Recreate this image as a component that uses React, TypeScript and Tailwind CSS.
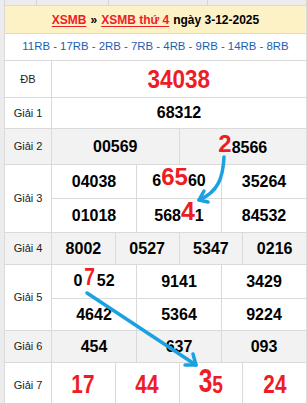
const RED = "text-[#ee1c25]"

function Label({ children, className = "" }: { children: React.ReactNode; className?: string }) {
  return (
    <div className={`flex items-center justify-center text-[11px] text-[#222] ${className}`}>
      {children}
    </div>
  )
}

function Num({ children, className = "", red = false }: { children: React.ReactNode; className?: string; red?: boolean }) {
  return (
    <div className={`flex items-center justify-center font-bold ${red ? "text-[#ee1c25]" : "text-black text-[16px]"} ${className}`}>
      {children}
    </div>
  )
}

// red highlighted digits, drawn a bit squeezed like the source image
function Hi({ children, className = "" }: { children: React.ReactNode; className?: string }) {
  return <span className={`inline-block leading-none ${RED} ${className}`}>{children}</span>
}

export default function App() {
  const codes = ["11RB", "17RB", "2RB", "7RB", "4RB", "9RB", "14RB", "8RB"]

  return (
    <div className="relative w-[307px] h-[403px] overflow-hidden bg-[#ececec] font-['Liberation_Sans',Arial,sans-serif]">
      {/* tail of the previous table */}
      <div className="ml-[4px] grid h-[5px] grid-cols-[31px_71px_98px_1fr] gap-px bg-[#d6d6d6] px-px">
        <div className="bg-[#ececec]" />
        <div className="bg-[#ececec]" />
        <div className="bg-[#ececec]" />
        <div className="bg-[#ececec]" />
      </div>

      <div className="ml-[4px] grid w-[303px] grid-cols-[46px_repeat(12,1fr)] gap-px bg-[#dadada] p-px">
        <div className="col-span-13 flex h-[27px] items-center justify-center bg-[#fdf1c6] text-[12px] font-bold text-black">
          <a className={`${RED} underline underline-offset-2`}>XSMB</a>
          <span className="mx-1">»</span>
          <a className={`${RED} underline underline-offset-2`}>XSMB thứ 4</a>
          <span className="ml-1">ngày 3-12-2025</span>
        </div>

        <div className="col-span-13 flex h-[26px] items-center justify-center bg-white text-[11.4px] text-[#1d5fae]">
          {codes.join(" - ")}
        </div>

        {/* ĐB */}
        <Label className="h-[36px] bg-white">ĐB</Label>
        <Num red className="col-span-12 bg-white">
          <Hi className="origin-center scale-x-[0.9] text-[25px]">34038</Hi>
        </Num>

        {/* Giải 1 */}
        <Label className="h-[30px] bg-white">Giải 1</Label>
        <Num className="col-span-12 bg-white">68312</Num>

        {/* Giải 2 */}
        <Label className="h-[35px] bg-[#f2f2f2]">Giải 2</Label>
        <Num className="col-span-6 bg-[#f2f2f2]">00569</Num>
        <Num className="col-span-6 items-end bg-[#f2f2f2] pb-[8px]">
          <Hi className="text-[24px]">2</Hi>
          <span className="leading-none">8566</span>
        </Num>

        {/* Giải 3 */}
        <Label className="row-span-2 bg-white">Giải 3</Label>
        <Num className="col-span-4 h-[33px] bg-white">04038</Num>
        <Num className="col-span-4 items-end bg-white pb-[9px]">
          <span className="leading-none">6</span>
          <Hi className="text-[24px]">65</Hi>
          <span className="leading-none">60</span>
        </Num>
        <Num className="col-span-4 bg-white">35264</Num>
        <Num className="col-span-4 h-[33px] bg-white">01018</Num>
        <Num className="col-span-4 items-end bg-white pb-[8px]">
          <span className="leading-none">568</span>
          <Hi className="text-[25px]">4</Hi>
          <span className="leading-none">1</span>
        </Num>
        <Num className="col-span-4 bg-white">84532</Num>

        {/* Giải 4 */}
        <Label className="h-[31px] bg-[#f2f2f2]">Giải 4</Label>
        {["8002", "0527", "5347", "0216"].map(n => (
          <Num key={n} className="col-span-3 bg-[#f2f2f2]">{n}</Num>
        ))}

        {/* Giải 5 */}
        <Label className="row-span-2 bg-white">Giải 5</Label>
        <Num className="col-span-4 h-[33px] items-end bg-white pb-[9px]">
          <span className="leading-none">0</span>
          <Hi className="ml-px scale-x-[0.8] text-[24px]">7</Hi>
          <span className="leading-none">52</span>
        </Num>
        <Num className="col-span-4 bg-white">9141</Num>
        <Num className="col-span-4 bg-white">3429</Num>
        <Num className="col-span-4 h-[31px] bg-white">4642</Num>
        <Num className="col-span-4 bg-white">5364</Num>
        <Num className="col-span-4 bg-white">9224</Num>

        {/* Giải 6 */}
        <Label className="h-[31px] bg-[#f2f2f2]">Giải 6</Label>
        {["454", "637", "093"].map(n => (
          <Num key={n} className="col-span-4 bg-[#f2f2f2]">{n}</Num>
        ))}

        {/* Giải 7 */}
        <Label className="h-[44px] bg-white">Giải 7</Label>
        {["17", "44"].map(n => (
          <Num key={n} red className="col-span-3 items-end bg-white pb-[11px]">
            <Hi className="scale-x-[0.83] text-[25px]">{n}</Hi>
          </Num>
        ))}
        <Num red className="col-span-3 items-end bg-white pb-[11px]">
          <Hi className="-mx-[3px] scale-x-[0.72] text-[34px]">3</Hi>
          <Hi className="-mx-px scale-x-[0.8] text-[24px]">5</Hi>
        </Num>
        <Num red className="col-span-3 items-end bg-white pb-[11px]">
          <Hi className="scale-x-[0.83] text-[25px]">24</Hi>
        </Num>
      </div>

      {/* arrows drawn over the table */}
      <svg className="pointer-events-none absolute left-0 top-0" width="307" height="403" viewBox="0 0 307 403">
        <g fill="none" stroke="#1aa1e1" strokeWidth="3.5" strokeLinecap="round" strokeLinejoin="round">
          <path d="M224 157 C 223 178, 218 192, 199 200" />
          <path d="M199 200 L 204 191 M199 200 L 208 202" />
          <path d="M87 293 L 196 365" />
          <path d="M196 365 L 185 365 M196 365 L 193 354" />
        </g>
      </svg>
    </div>
  )
}
